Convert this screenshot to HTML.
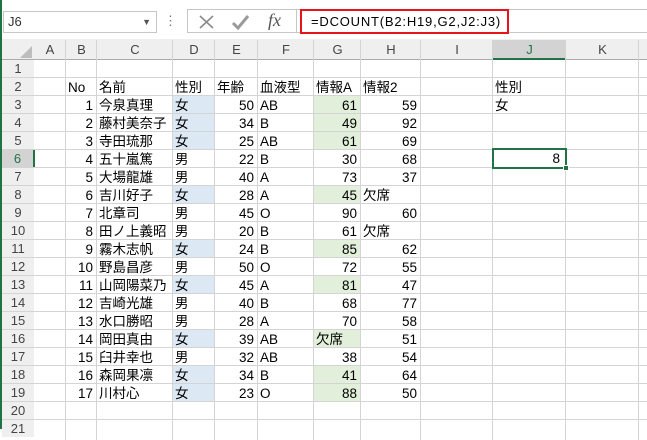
<!DOCTYPE html>
<html><head><meta charset="utf-8"><style>
*{margin:0;padding:0;box-sizing:border-box}
body{width:647px;height:429px;overflow:hidden;background:#fff;font-family:"Liberation Sans","Noto Sans CJK JP",sans-serif;font-size:13.5px;color:#000;position:relative}
.a{position:absolute}
.vl{position:absolute;top:40px;width:1px;height:400px;background:#d4d4d4}
.hl{position:absolute;left:0;width:647px;height:1px;background:#d4d4d4}
.c{position:absolute;height:17px;line-height:19px;white-space:nowrap;overflow:visible}
.r{text-align:right;padding-right:3px}
.l{padding-left:2px}
.hd{position:absolute;top:40px;height:19px;line-height:20px;text-align:center;color:#444;font-size:13px}
.rh{position:absolute;left:2px;width:32px;height:17px;line-height:18px;text-align:center;color:#444;font-size:13px;background:#efefef}
.bl{background:#dde8f5}.gr{background:#e2efda}
</style></head><body>
<div class="a" style="left:0;top:0;width:2px;height:429px;background:#217346;z-index:5"></div>
<div class="a" style="left:3px;top:11px;width:154px;height:22px;border:1px solid #c6c6c6;background:#fff;line-height:20px;padding-left:4px;font-size:13px;color:#333">J6<span style="position:absolute;right:5px;top:0;font-size:9px;color:#555">▼</span></div>
<div class="a" style="left:164px;top:12px;font-size:13px;color:#777;line-height:18px">⋮</div>
<div class="a" style="left:187px;top:9px;width:110px;height:24px;border:1px solid #c6c6c6;background:#fff">
<svg width="110" height="24" style="position:absolute;left:0;top:0"><path d="M12 6 L25 18 M25 6 L12 18" stroke="#8a8a8a" stroke-width="1.6"/><path d="M45 13 L50 18 L60 6" stroke="#9a9a9a" stroke-width="3" fill="none"/></svg>
<span style="position:absolute;left:80px;top:0px;font-family:'Liberation Serif',serif;font-style:italic;font-size:18px;color:#555">fx</span></div>
<div class="a" style="left:297px;top:9px;width:350px;height:24px;border-top:1px solid #c6c6c6;border-bottom:1px solid #c6c6c6;background:#fff"></div>
<div class="a" style="left:300px;top:9px;width:209px;height:25px;border:2px solid #e8141b;line-height:21px;padding-left:9px;font-size:13px;letter-spacing:0.8px">=DCOUNT(B2:H19,G2,J2:J3)</div>
<div class="a" style="left:2px;top:39px;width:645px;height:21px;background:#efefef;border-bottom:1px solid #ababab"></div>
<svg class="a" style="left:20px;top:46px" width="12" height="12"><path d="M12 0 L12 12 L0 12Z" fill="#bdbdbd"/></svg>
<div class="hd" style="left:34px;width:32px">A</div>
<div class="hd" style="left:66px;width:31px">B</div>
<div class="hd" style="left:97px;width:76px">C</div>
<div class="hd" style="left:173px;width:42px">D</div>
<div class="hd" style="left:215px;width:43px">E</div>
<div class="hd" style="left:258px;width:56px">F</div>
<div class="hd" style="left:314px;width:47px">G</div>
<div class="hd" style="left:361px;width:60px">H</div>
<div class="hd" style="left:421px;width:72px">I</div>
<div class="hd" style="left:493px;width:73px;background:#d3d3d3;color:#217346;border-bottom:2px solid #217346;height:20px">J</div>
<div class="hd" style="left:566px;width:73px">K</div>
<div class="a" style="left:2px;top:60px;width:32px;height:369px;background:#efefef;border-right:1px solid #ababab"></div>
<div class="hl" style="top:77px"></div><div class="hl" style="top:95px"></div><div class="hl" style="top:113px"></div><div class="hl" style="top:131px"></div><div class="hl" style="top:149px"></div><div class="hl" style="top:167px"></div><div class="hl" style="top:185px"></div><div class="hl" style="top:203px"></div><div class="hl" style="top:221px"></div><div class="hl" style="top:239px"></div><div class="hl" style="top:257px"></div><div class="hl" style="top:275px"></div><div class="hl" style="top:293px"></div><div class="hl" style="top:311px"></div><div class="hl" style="top:329px"></div><div class="hl" style="top:347px"></div><div class="hl" style="top:365px"></div><div class="hl" style="top:383px"></div><div class="hl" style="top:401px"></div><div class="hl" style="top:419px"></div>
<div class="vl" style="left:65px"></div><div class="vl" style="left:96px"></div><div class="vl" style="left:172px"></div><div class="vl" style="left:214px"></div><div class="vl" style="left:257px"></div><div class="vl" style="left:313px"></div><div class="vl" style="left:360px"></div><div class="vl" style="left:420px"></div><div class="vl" style="left:492px"></div><div class="vl" style="left:565px"></div><div class="vl" style="left:638px"></div>
<div class="rh" style="top:60px">1</div><div class="rh" style="top:78px">2</div><div class="rh" style="top:96px">3</div><div class="rh" style="top:114px">4</div><div class="rh" style="top:132px">5</div>
<div class="rh" style="top:150px;background:#d3d3d3;color:#217346;border-right:2px solid #217346;width:33px">6</div>
<div class="rh" style="top:168px">7</div><div class="rh" style="top:186px">8</div><div class="rh" style="top:204px">9</div><div class="rh" style="top:222px">10</div><div class="rh" style="top:240px">11</div><div class="rh" style="top:258px">12</div><div class="rh" style="top:276px">13</div><div class="rh" style="top:294px">14</div><div class="rh" style="top:312px">15</div><div class="rh" style="top:330px">16</div><div class="rh" style="top:348px">17</div><div class="rh" style="top:366px">18</div><div class="rh" style="top:384px">19</div><div class="rh" style="top:402px">20</div><div class="rh" style="top:420px">21</div>
<div class="c l" style="top:78px;left:66px">No</div><div class="c l" style="top:78px;left:97px">名前</div><div class="c l" style="top:78px;left:173px">性別</div><div class="c l" style="top:78px;left:215px">年齢</div><div class="c l" style="top:78px;left:258px">血液型</div><div class="c l" style="top:78px;left:314px">情報A</div><div class="c l" style="top:78px;left:361px">情報2</div><div class="c l" style="top:78px;left:493px">性別</div>
<div class="c l" style="top:96px;left:493px">女</div>
<div style="position:absolute;left:0;top:96px">
<div class="c r" style="top:0;left:66px;width:30px">1</div><div class="c l" style="top:0;left:97px">今泉真理</div><div class="c l bl" style="top:0;left:173px;width:41px">女</div><div class="c r" style="top:0;left:215px;width:42px">50</div><div class="c l" style="top:0;left:258px">AB</div><div class="c r gr" style="top:0;left:314px;width:46px">61</div><div class="c r" style="top:0;left:361px;width:59px">59</div>
<div class="c r" style="top:18px;left:66px;width:30px">2</div><div class="c l" style="top:18px;left:97px">藤村美奈子</div><div class="c l bl" style="top:18px;left:173px;width:41px">女</div><div class="c r" style="top:18px;left:215px;width:42px">34</div><div class="c l" style="top:18px;left:258px">B</div><div class="c r gr" style="top:18px;left:314px;width:46px">49</div><div class="c r" style="top:18px;left:361px;width:59px">92</div>
<div class="c r" style="top:36px;left:66px;width:30px">3</div><div class="c l" style="top:36px;left:97px">寺田琉那</div><div class="c l bl" style="top:36px;left:173px;width:41px">女</div><div class="c r" style="top:36px;left:215px;width:42px">25</div><div class="c l" style="top:36px;left:258px">AB</div><div class="c r gr" style="top:36px;left:314px;width:46px">61</div><div class="c r" style="top:36px;left:361px;width:59px">69</div>
<div class="c r" style="top:54px;left:66px;width:30px">4</div><div class="c l" style="top:54px;left:97px">五十嵐篤</div><div class="c l" style="top:54px;left:173px;width:41px">男</div><div class="c r" style="top:54px;left:215px;width:42px">22</div><div class="c l" style="top:54px;left:258px">B</div><div class="c r" style="top:54px;left:314px;width:46px">30</div><div class="c r" style="top:54px;left:361px;width:59px">68</div>
<div class="c r" style="top:72px;left:66px;width:30px">5</div><div class="c l" style="top:72px;left:97px">大場龍雄</div><div class="c l" style="top:72px;left:173px;width:41px">男</div><div class="c r" style="top:72px;left:215px;width:42px">40</div><div class="c l" style="top:72px;left:258px">A</div><div class="c r" style="top:72px;left:314px;width:46px">73</div><div class="c r" style="top:72px;left:361px;width:59px">37</div>
<div class="c r" style="top:90px;left:66px;width:30px">6</div><div class="c l" style="top:90px;left:97px">吉川好子</div><div class="c l bl" style="top:90px;left:173px;width:41px">女</div><div class="c r" style="top:90px;left:215px;width:42px">28</div><div class="c l" style="top:90px;left:258px">A</div><div class="c r gr" style="top:90px;left:314px;width:46px">45</div><div class="c l" style="top:90px;left:361px">欠席</div>
<div class="c r" style="top:108px;left:66px;width:30px">7</div><div class="c l" style="top:108px;left:97px">北章司</div><div class="c l" style="top:108px;left:173px;width:41px">男</div><div class="c r" style="top:108px;left:215px;width:42px">45</div><div class="c l" style="top:108px;left:258px">O</div><div class="c r" style="top:108px;left:314px;width:46px">90</div><div class="c r" style="top:108px;left:361px;width:59px">60</div>
<div class="c r" style="top:126px;left:66px;width:30px">8</div><div class="c l" style="top:126px;left:97px">田ノ上義昭</div><div class="c l" style="top:126px;left:173px;width:41px">男</div><div class="c r" style="top:126px;left:215px;width:42px">20</div><div class="c l" style="top:126px;left:258px">B</div><div class="c r" style="top:126px;left:314px;width:46px">61</div><div class="c l" style="top:126px;left:361px">欠席</div>
<div class="c r" style="top:144px;left:66px;width:30px">9</div><div class="c l" style="top:144px;left:97px">霧木志帆</div><div class="c l bl" style="top:144px;left:173px;width:41px">女</div><div class="c r" style="top:144px;left:215px;width:42px">24</div><div class="c l" style="top:144px;left:258px">B</div><div class="c r gr" style="top:144px;left:314px;width:46px">85</div><div class="c r" style="top:144px;left:361px;width:59px">62</div>
<div class="c r" style="top:162px;left:66px;width:30px">10</div><div class="c l" style="top:162px;left:97px">野島昌彦</div><div class="c l" style="top:162px;left:173px;width:41px">男</div><div class="c r" style="top:162px;left:215px;width:42px">50</div><div class="c l" style="top:162px;left:258px">O</div><div class="c r" style="top:162px;left:314px;width:46px">72</div><div class="c r" style="top:162px;left:361px;width:59px">55</div>
<div class="c r" style="top:180px;left:66px;width:30px">11</div><div class="c l" style="top:180px;left:97px">山岡陽菜乃</div><div class="c l bl" style="top:180px;left:173px;width:41px">女</div><div class="c r" style="top:180px;left:215px;width:42px">45</div><div class="c l" style="top:180px;left:258px">A</div><div class="c r gr" style="top:180px;left:314px;width:46px">81</div><div class="c r" style="top:180px;left:361px;width:59px">47</div>
<div class="c r" style="top:198px;left:66px;width:30px">12</div><div class="c l" style="top:198px;left:97px">吉崎光雄</div><div class="c l" style="top:198px;left:173px;width:41px">男</div><div class="c r" style="top:198px;left:215px;width:42px">40</div><div class="c l" style="top:198px;left:258px">B</div><div class="c r" style="top:198px;left:314px;width:46px">68</div><div class="c r" style="top:198px;left:361px;width:59px">77</div>
<div class="c r" style="top:216px;left:66px;width:30px">13</div><div class="c l" style="top:216px;left:97px">水口勝昭</div><div class="c l" style="top:216px;left:173px;width:41px">男</div><div class="c r" style="top:216px;left:215px;width:42px">28</div><div class="c l" style="top:216px;left:258px">A</div><div class="c r" style="top:216px;left:314px;width:46px">70</div><div class="c r" style="top:216px;left:361px;width:59px">58</div>
<div class="c r" style="top:234px;left:66px;width:30px">14</div><div class="c l" style="top:234px;left:97px">岡田真由</div><div class="c l bl" style="top:234px;left:173px;width:41px">女</div><div class="c r" style="top:234px;left:215px;width:42px">39</div><div class="c l" style="top:234px;left:258px">AB</div><div class="c l gr" style="top:234px;left:314px;width:46px">欠席</div><div class="c r" style="top:234px;left:361px;width:59px">51</div>
<div class="c r" style="top:252px;left:66px;width:30px">15</div><div class="c l" style="top:252px;left:97px">臼井幸也</div><div class="c l" style="top:252px;left:173px;width:41px">男</div><div class="c r" style="top:252px;left:215px;width:42px">32</div><div class="c l" style="top:252px;left:258px">AB</div><div class="c r" style="top:252px;left:314px;width:46px">38</div><div class="c r" style="top:252px;left:361px;width:59px">54</div>
<div class="c r" style="top:270px;left:66px;width:30px">16</div><div class="c l" style="top:270px;left:97px">森岡果凛</div><div class="c l bl" style="top:270px;left:173px;width:41px">女</div><div class="c r" style="top:270px;left:215px;width:42px">34</div><div class="c l" style="top:270px;left:258px">B</div><div class="c r gr" style="top:270px;left:314px;width:46px">41</div><div class="c r" style="top:270px;left:361px;width:59px">64</div>
<div class="c r" style="top:288px;left:66px;width:30px">17</div><div class="c l" style="top:288px;left:97px">川村心</div><div class="c l bl" style="top:288px;left:173px;width:41px">女</div><div class="c r" style="top:288px;left:215px;width:42px">23</div><div class="c l" style="top:288px;left:258px">O</div><div class="c r gr" style="top:288px;left:314px;width:46px">88</div><div class="c r" style="top:288px;left:361px;width:59px">50</div>
</div>
<div class="a" style="left:492px;top:148px;width:75px;height:21px;border:2px solid #217346;line-height:18px;text-align:right;padding-right:5px">8</div>
<div class="a" style="left:563px;top:165px;width:6px;height:6px;background:#217346;border:1px solid #fff"></div>
</body></html>
